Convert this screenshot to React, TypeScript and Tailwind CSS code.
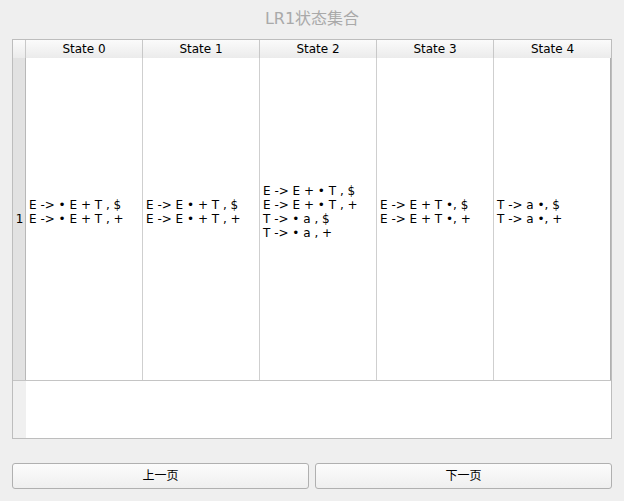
import React from "react";

const cols: string[][] = [
  ["E -> • E + T , $", "E -> • E + T , +"],
  ["E -> E • + T , $", "E -> E • + T , +"],
  ["E -> E + • T , $", "E -> E + • T , +", "T -> • a , $", "T -> • a , +"],
  ["E -> E + T •, $", "E -> E + T •, +"],
  ["T -> a •, $", "T -> a •, +"],
];

const font = { fontFamily: '"DejaVu Sans", "Noto Sans CJK SC", sans-serif' };

export default function App() {
  return (
    <div className="w-[624px] h-[501px] bg-[#efefef] flex flex-col" style={font}>
      <div className="h-[39px] flex items-start justify-center pt-[9px] text-[16px] leading-[20px] text-[#a9a9a9]">
        LR1状态集合
      </div>
      <div className="mx-[12px] h-[400px] border border-[#bdbdbd] bg-white flex flex-col">
        <div className="flex h-[18px] bg-gradient-to-b from-[#fbfbfb] to-[#ebebeb]">
          <div className="w-[13px] border-r border-[#c8c8c8]" />
          {[0, 1, 2, 3, 4].map((i) => (
            <div
              key={i}
              className="w-[117px] border-r border-[#c8c8c8] last:border-r-0 flex items-center justify-center text-[12px] leading-[14px] text-black"
            >
              State {i}
            </div>
          ))}
        </div>
        <div className="flex h-[323px] border-b border-[#c4c4c4]">
          <div className="w-[13px] bg-[#e2e2e2] border-r border-[#b8b8b8] flex items-center justify-center text-[12px] leading-[14px] text-black pl-[1px]">
            1
          </div>
          {cols.map((lines, i) => (
            <div
              key={i}
              className={`w-[117px] border-r ${i === 4 ? "border-[#b0b0b0]" : "border-[#cfcfcf]"} flex flex-col justify-center pl-[3px] pb-[15px] text-[12px] leading-[14px] text-black whitespace-pre`}
            >
              {lines.map((l, j) => (
                <div key={j}>{l}</div>
              ))}
            </div>
          ))}
        </div>
        <div className="flex flex-1">
          <div className="w-[13px] bg-[#f0f0f0]" />
          <div className="flex-1 bg-white" />
        </div>
      </div>
      <div className="mt-[24px] mx-[12px] flex gap-[6px]">
        <button className="w-[297px] h-[26px] rounded-[3px] border border-[#b0b0b0] bg-gradient-to-b from-[#fcfcfc] to-[#efefef] text-[12px] text-black flex items-center justify-center">
          上一页
        </button>
        <button className="w-[297px] h-[26px] rounded-[3px] border border-[#b0b0b0] bg-gradient-to-b from-[#fcfcfc] to-[#efefef] text-[12px] text-black flex items-center justify-center">
          下一页
        </button>
      </div>
    </div>
  );
}
